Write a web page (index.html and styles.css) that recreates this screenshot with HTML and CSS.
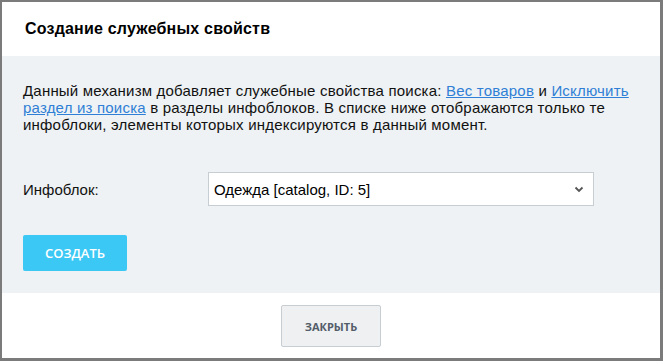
FILE: index.html
```html
<!DOCTYPE html>
<html lang="ru">
<head>
<meta charset="utf-8">
<link rel="stylesheet" href="styles.css">
</head>
<body>
<div class="dialog">
  <div class="dialog-head">Создание служебных свойств</div>
  <div class="dialog-body">
    <p class="intro">Данный механизм добавляет служебные свойства поиска: <a href="#">Вес товаров</a> и <a href="#">Исключить раздел из поиска</a> в разделы инфоблоков. В списке ниже отображаются только те инфоблоки, элементы которых индексируются в данный момент.</p>
    <div class="form-row">
      <label class="form-label">Инфоблок:</label>
      <div class="select-wrap">
        <div class="select">Одежда [catalog, ID: 5]</div>
        <svg class="chevron" width="10" height="7" viewBox="0 0 10 7"><path d="M1.5 1.5 L5 5 L8.5 1.5" fill="none" stroke="#555" stroke-width="1.8"/></svg>
      </div>
    </div>
    <button class="btn btn-primary">Создать</button>
  </div>
  <div class="dialog-foot">
    <button class="btn btn-light">Закрыть</button>
  </div>
</div>
</body>
</html>
```
FILE: styles.css
```css
* { box-sizing: border-box; }
html, body { margin: 0; height: 100%; }
body {
  background: #7b7b7b;
  font-family: "Liberation Sans", Arial, sans-serif;
  color: #000;
  padding: 2px 3px 3px 2px;
}
.dialog {
  width: 658px;
  height: 356px;
  background: #fff;
  display: flex;
  flex-direction: column;
}
.dialog-head {
  height: 54px;
  display: flex;
  align-items: center;
  padding-left: 23px;
  font-size: 16px;
  font-weight: bold;
  letter-spacing: 0.2px;
  color: #000;
}
.dialog-body {
  background: #eef2f4;
  padding: 26px 21px 22px 21px;
  height: 237px;
}
.intro {
  margin: 0;
  font-size: 15px;
  line-height: 17px;
  letter-spacing: 0.2px;
  color: #111;
}
.intro a {
  color: #2f7fd6;
  text-decoration: underline;
}
.form-row {
  display: flex;
  align-items: center;
  margin-top: 39px;
}
.form-label {
  width: 185px;
  font-size: 15px;
  color: #111;
}
.select-wrap {
  position: relative;
  width: 386px;
}
.select {
  height: 34px;
  background: #fff;
  border: 1px solid #c6cdd3;
  font-size: 15px;
  display: flex;
  align-items: center;
  padding-left: 5px;
  color: #000;
}
.chevron {
  position: absolute;
  right: 10px;
  top: 14px;
}
.btn {
  font-family: "Open Sans", sans-serif;
  text-transform: uppercase;
  border-radius: 2px;
  cursor: pointer;
}
.btn-primary {
  margin-top: 29px;
  width: 104px;
  height: 36px;
  background: #3bc8f5;
  border: none;
  color: #fff;
  font-size: 13px;
  font-weight: 600;
}
.dialog-foot {
  flex: 1;
  display: flex;
  justify-content: center;
  padding-top: 12px;
}
.btn-light {
  width: 100px;
  height: 42px;
  background: #eef0f2;
  border: 1px solid #c6cdd3;
  color: #535c69;
  font-size: 11px;
  font-weight: 700;
}
```
